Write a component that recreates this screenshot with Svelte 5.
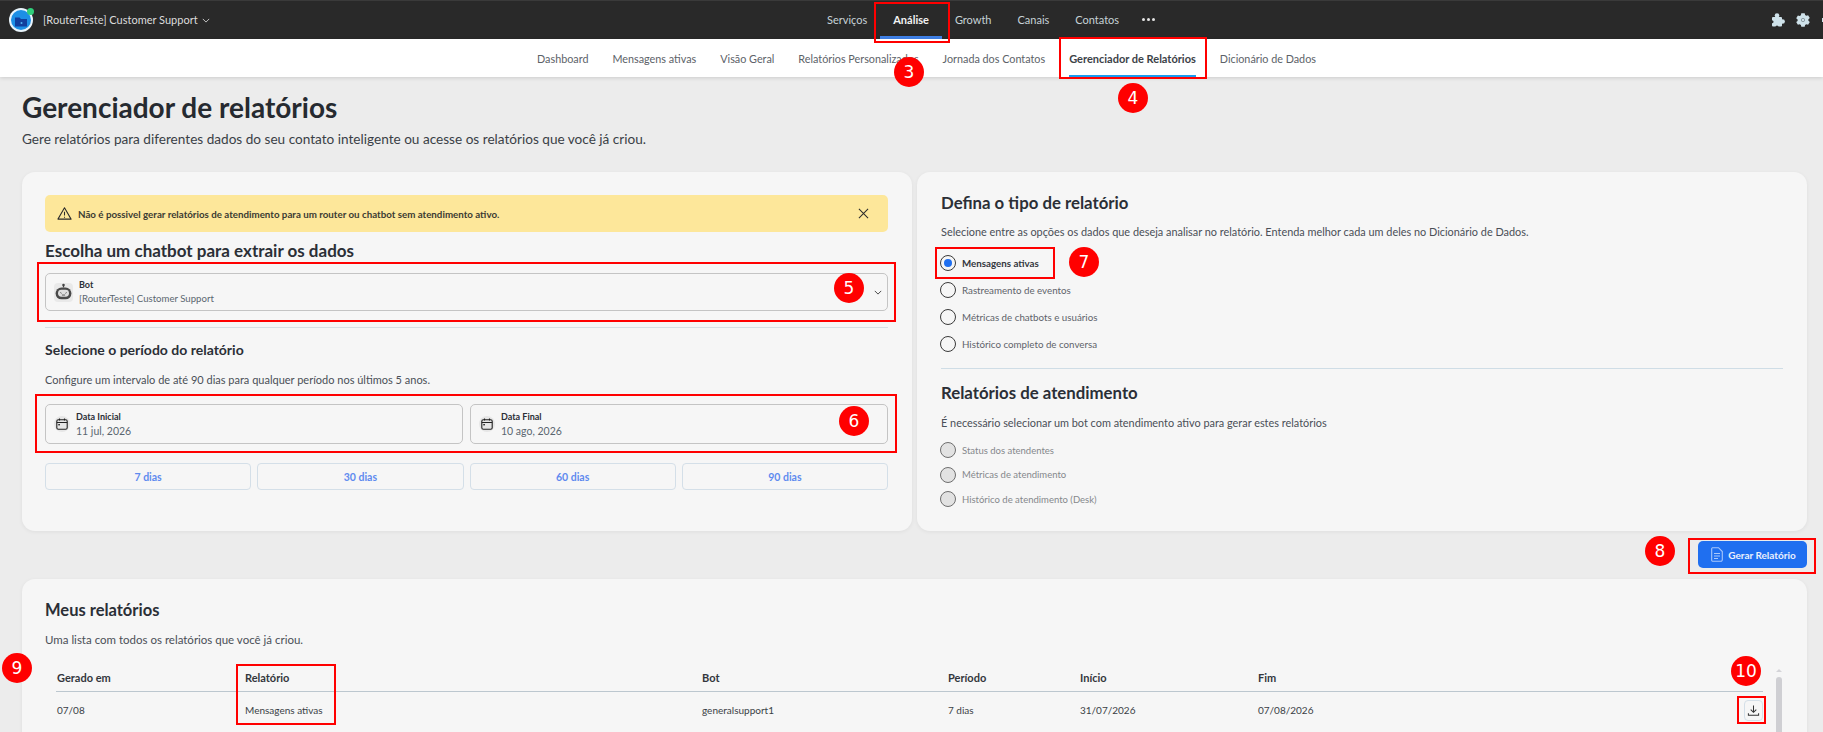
<script>
  const mainNav = ['Serviços', 'Análise', 'Growth', 'Canais', 'Contatos'];
  const subNav = ['Dashboard', 'Mensagens ativas', 'Visão Geral', 'Relatórios Personalizados', 'Jornada dos Contatos', 'Gerenciador de Relatórios', 'Dicionário de Dados'];
  const dates = [{ label: 'Data Inicial', value: '11 jul, 2026' }, { label: 'Data Final', value: '10 ago, 2026' }];
  const ranges = ['7 dias', '30 dias', '60 dias', '90 dias'];
  const types = ['Mensagens ativas', 'Rastreamento de eventos', 'Métricas de chatbots e usuários', 'Histórico completo de conversa'];
  const desk = ['Status dos atendentes', 'Métricas de atendimento', 'Histórico de atendimento (Desk)'];
  const marks = [3, 4, 5, 6, 7, 8, 9, 10];
  const boxes = ['a', 'b', 'c', 'd', 'e', 'f', 'g', 'h'];
</script>

<div class="page">
  <header class="top">
    <div class="brand">
      <span class="logo">
        <svg viewBox="0 0 24 24" width="24" height="24">
          <circle cx="12" cy="12" r="12" fill="#e9f4fb" />
          <circle cx="12" cy="12" r="10" fill="#1d8fe6" />
          <path d="M6 9.500h4.500l1.500 1.500h6v7.500H6z" fill="#123f9e" />
          <circle cx="12.500" cy="15" r="1" fill="#4fb2f2" />
        </svg>
        <i class="online"></i>
      </span>
      <span class="bot-name">[RouterTeste] Customer Support</span>
      <svg class="caret" viewBox="0 0 10 6" width="8" height="5"><path d="M1 1l4 4 4-4" fill="none" stroke="#d8d8d8" stroke-width="1.100" /></svg>
    </div>
    <nav class="main-nav">
      {#each mainNav as item, i}
        <span class="tab" class:on={i === 1}>{item}</span>
      {/each}
      <span class="more"><i></i><i></i><i></i></span>
    </nav>
    <div class="tools">
      <svg viewBox="0 0 14 14" width="14" height="14">
        <rect x="1" y="4" width="10" height="9.500" rx="1" fill="#cfe2ea" />
        <circle cx="6" cy="2.600" r="2.300" fill="#cfe2ea" />
        <circle cx="11.600" cy="8.500" r="2.300" fill="#cfe2ea" />
        <circle cx="1" cy="8.700" r="1.500" fill="#292929" />
        <circle cx="6" cy="14" r="1.500" fill="#292929" />
      </svg>
      <svg viewBox="0 0 14 14" width="14" height="14">
        <path d="M5.300.3h3.400l.4 1.800 1.200.7 1.800-.6 1.700 2.900-1.400 1.200v1.400l1.400 1.200-1.700 2.900-1.800-.6-1.200.7-.4 1.800H5.300l-.4-1.800-1.200-.7-1.800.6L.2 9.100l1.400-1.200V6.500L.2 5.300l1.700-2.900 1.800.6 1.200-.7z" fill="#cfe2ea" />
        <circle cx="7" cy="7" r="1.700" fill="none" stroke="#7b8a90" stroke-width=".8" />
      </svg>
      <i class="sliver"></i>
    </div>
  </header>

  <nav class="sub-nav">
    {#each subNav as item, i}
      <span class="sub" class:on={i === 5}>{item}</span>
    {/each}
  </nav>

  <main>
    <h1>Gerenciador de relatórios</h1>
    <p class="lead">Gere relatórios para diferentes dados do seu contato inteligente ou acesse os relatórios que você já criou.</p>

    <div class="cards">
      <section class="card left">
        <div class="alert">
          <svg viewBox="0 0 16 16" width="15" height="15"><path d="M8 1.800L1 14h14z" fill="none" stroke="#2a2a2a" stroke-width="1.100" stroke-linejoin="round" /><path d="M8 6v4.200M8 11.500v1" stroke="#2a2a2a" stroke-width="1.100" /></svg>
          <span class="alert-text">Não é possivel gerar relatórios de atendimento para um router ou chatbot sem atendimento ativo.</span>
          <svg class="close" viewBox="0 0 12 12" width="11" height="11"><path d="M1 1l10 10M11 1L1 11" stroke="#2a2a2a" stroke-width="1.100" /></svg>
        </div>
        <h2 class="h-bot">Escolha um chatbot para extrair os dados</h2>
        <div class="select">
          <span class="ico-bot">
            <svg viewBox="0 0 18 18" width="19" height="19">
              <path d="M9 1.200v3" stroke="#444" stroke-width="1.200" /><circle cx="9" cy="1.800" r="1.200" fill="#444" />
              <rect x="1.500" y="4.200" width="15" height="11.300" rx="5.500" fill="#4a4a4a" />
              <rect x="3.800" y="6.500" width="10.400" height="6.500" rx="3.200" fill="#dedede" />
              <path d="M6 9l1.200.8M12 9l-1.200.8M7.500 11.400h3" stroke="#444" stroke-width=".8" fill="none" />
            </svg>
          </span>
          <span class="field f-bot">
            <b>Bot</b>
            <span>[RouterTeste] Customer Support</span>
          </span>
          <svg class="chev" viewBox="0 0 10 6" width="8" height="5"><path d="M1 1l4 4 4-4" fill="none" stroke="#444" stroke-width="1.200" /></svg>
        </div>
        <hr />
        <h3>Selecione o período do relatório</h3>
        <p class="note">Configure um intervalo de até 90 dias para qualquer período nos últimos 5 anos.</p>
        <div class="dates">
          {#each dates as d}
            <div class="date">
              <span class="ico-cal">
                <svg viewBox="0 0 12 12" width="12" height="12"><rect x=".8" y="1.800" width="10.400" height="9.400" rx="1.500" fill="none" stroke="#222" stroke-width="1.100" /><path d="M.8 4.500h10.400M3.500.5v2M8.500.5v2" stroke="#222" stroke-width="1.100" /><rect x="2.300" y="6" width="1.600" height="1.400" fill="#222" /></svg>
              </span>
              <span class="field">
                <b>{d.label}</b>
                <span>{d.value}</span>
              </span>
            </div>
          {/each}
        </div>
        <div class="ranges">
          {#each ranges as r}
            <span class="range">{r}</span>
          {/each}
        </div>
      </section>

      <section class="card right">
        <h2 class="h-type">Defina o tipo de relatório</h2>
        <p class="note n-type">Selecione entre as opções os dados que deseja analisar no relatório. Entenda melhor cada um deles no Dicionário de Dados.</p>
        <div class="radios">
          {#each types as t, i}
            <div class="radio" class:checked={i === 0}><i></i><span>{t}</span></div>
          {/each}
        </div>
        <hr class="hr-type" />
        <h2 class="h-type">Relatórios de atendimento</h2>
        <p class="note n-type">É necessário selecionar um bot com atendimento ativo para gerar estes relatórios</p>
        <div class="radios off">
          {#each desk as t}
            <div class="radio disabled"><i></i><span>{t}</span></div>
          {/each}
        </div>
      </section>
    </div>

    <div class="actions">
      <button class="generate">
        <svg viewBox="0 0 12 15" width="12" height="15"><path d="M1.500.7h6l3.800 3.800v8.300a1.500 1.500 0 0 1-1.500 1.500H1.500A1 1 0 0 1 .7 13.300V1.500A1 1 0 0 1 1.500.7z" fill="none" stroke="#a9c8fb" stroke-width="1.100" /><path d="M3 6.500h6M3 9h6M3 11.500h4" stroke="#a9c8fb" stroke-width="1" /></svg>
        Gerar Relatório
      </button>
    </div>

    <section class="card list">
      <h2 class="h-list">Meus relatórios</h2>
      <p class="note n-list">Uma lista com todos os relatórios que você já criou.</p>
      <div class="table-wrap">
        <div class="table">
          <div class="row head">
            <span>Gerado em</span><span>Relatório</span><span>Bot</span><span>Período</span><span>Início</span><span>Fim</span><span></span>
          </div>
          <div class="row">
            <span>07/08</span><span>Mensagens ativas</span><span>generalsupport1</span><span>7 dias</span><span>31/07/2026</span><span>07/08/2026</span>
            <span class="dl-cell">
              <span class="dl">
                <svg viewBox="0 0 14 14" width="13" height="13"><path d="M7 1.500v7M4 6l3 3 3-3" fill="none" stroke="#333" stroke-width="1.100" /><path d="M1.500 10v2.200h11V10" fill="none" stroke="#333" stroke-width="1.100" /></svg>
              </span>
            </span>
          </div>
        </div>
        <div class="scroll"><i class="arrow"></i><i class="thumb"></i></div>
      </div>
    </section>
  </main>

  {#each boxes as b}
    <div class="box box-{b}"></div>
  {/each}
  {#each marks as m}
    <div class="mark mark-{m}">{m}</div>
  {/each}
</div>

<style>
  :global(body) { margin: 0; background: #ececec; }
  .page { position: relative; width: 1823px; height: 732px; overflow: hidden; font-family: "Lato", "Open Sans", sans-serif; color: #2b2f36; background: #ececec; }
  .top { height: 39px; box-sizing: border-box; border-top: 1px solid #3a3a3a; background: #292929; display: grid; grid-template-columns: 814px auto 1fr; align-items: center; }
  .brand { display: flex; align-items: center; padding-left: 9px; }
  .logo { position: relative; width: 24px; height: 24px; display: block; margin-right: 10px; }
  .logo svg { display: block; }
  .online { position: absolute; left: 18px; top: -0.500px; width: 7px; height: 7px; border-radius: 50%; background: #2fcf7a; }
  .bot-name { font-size: 11px; line-height: 14px; padding-bottom: 1px; color: #dcdcdc; white-space: nowrap; }
  .caret { margin-left: 4px; }
  .main-nav { display: flex; align-items: stretch; height: 38px; }
  .tab { display: flex; align-items: center; padding: 0 13px 2px; font-size: 11px; color: #c6d2d6; position: relative; white-space: nowrap; }
  .tab.on { color: #f2f2f2; font-weight: 700; }
  .tab.on::after { content: ""; position: absolute; left: 0; right: 0; bottom: 0; height: 3px; background: #3f80e6; }
  .more { display: flex; align-items: center; gap: 2px; margin-left: 10px; padding-bottom: 2px; }
  .more i { width: 3px; height: 3px; border-radius: 50%; background: #e4e4e4; }
  .tools { display: flex; justify-content: flex-end; align-items: center; gap: 11px; padding-right: 13px; position: relative; }
  .sliver { position: absolute; right: 0; width: 1px; height: 4px; background: #cfe2ea; }
  .sub-nav { height: 38px; background: #fff; box-shadow: 0 1px 4px rgba(0,0,0,.14); display: flex; justify-content: center; gap: 24px; padding-left: 30px; position: relative; box-sizing: border-box; }
  .sub { font-size: 10.800px; padding-top: 1px; color: #5c6268; display: flex; align-items: center; position: relative; white-space: nowrap; }
  .sub.on { font-size: 11px; font-weight: 700; color: #3c4248; }
  .sub.on::after { content: ""; position: absolute; left: 0; right: 0; bottom: 0; height: 2px; background: #1a9bf0; }
  main { padding: 0 16px 0 22px; }
  h1 { margin: 0; padding-top: 12px; font-size: 28px; line-height: 36px; font-weight: 700; color: #262a30; }
  .lead { margin: 0; padding-top: 5px; font-size: 13.600px; line-height: 18px; color: #3a3f46; }
  .cards { display: grid; grid-template-columns: 890px 890px; gap: 5px; margin-top: 24px; }
  .card { background: #f6f6f6; border-radius: 13px; box-shadow: 0 1px 4px rgba(0,0,0,.06); box-sizing: border-box; }
  .left { height: 359px; padding: 23px 24px 0 23px; }
  .alert { height: 37px; background: #fde79a; border-radius: 5px; display: flex; align-items: center; padding: 0 19px 0 12px; font-size: 9.750px; font-weight: 700; color: #3b3b32; }
  .alert-text { margin-left: 6px; flex: 1; }
  h2, h3 { margin: 0; font-weight: 700; color: #2b2f36; }
  .h-bot { font-size: 17px; line-height: 22px; margin-top: 8px; }
  .select { margin-top: 11px; height: 38px; box-sizing: border-box; border: 1px solid #c4c4c4; border-radius: 5px; display: flex; align-items: center; padding: 0 5px 0 8px; }
  .ico-bot { width: 19px; height: 19px; background: #e9e9e9; border-radius: 4px; display: flex; margin-right: 6px; }
  .field { flex: 1; display: flex; flex-direction: column; gap: 3.500px; font-size: 10.500px; line-height: 12px; color: #5b6670; }
  .field b { font-size: 9px; line-height: 11px; color: #2b2f36; }
  .f-bot { font-size: 9.600px; gap: 3px; }
  hr { margin: 16px 0 0; border: 0; border-top: 1px solid #d6dee4; }
  h3 { font-size: 14px; line-height: 18px; margin-top: 13px; }
  .note { margin: 0; font-size: 11px; line-height: 14px; color: #4a4f57; }
  .left .note { margin-top: 14px; }
  .dates { display: grid; grid-template-columns: 1fr 1fr; gap: 7px; margin-top: 17px; }
  .date { height: 40px; box-sizing: border-box; border: 1px solid #c4c4c4; border-radius: 5px; display: flex; align-items: center; padding: 0 8px; }
  .ico-cal { width: 16px; height: 16px; border-radius: 50%; background: #e6e6e6; display: flex; align-items: center; justify-content: center; margin-right: 6px; }
  .ranges { display: grid; grid-template-columns: repeat(4, 1fr); gap: 6px; margin-top: 19px; }
  .range { height: 27px; box-sizing: border-box; border: 1px solid #d4dfe8; border-radius: 4px; display: flex; align-items: center; justify-content: center; font-size: 10.500px; font-weight: 700; color: #5f8bef; }
  .right { height: 359px; padding: 20px 24px 0 24px; }
  .h-type { font-size: 16.800px; line-height: 22px; }
  .n-type { margin-top: 11px; font-size: 10.900px; }
  .radios { display: flex; flex-direction: column; gap: 11px; margin-top: 16px; margin-left: -1px; }
  .radio { display: flex; align-items: center; gap: 6px; height: 16px; font-size: 9.750px; color: #5e636a; }
  .radio i { width: 16px; height: 16px; box-sizing: border-box; border: 1px solid #3a3a3a; border-radius: 50%; display: block; position: relative; }
  .checked span { font-weight: 700; color: #33373d; }
  .checked i::after { content: ""; position: absolute; left: 3px; top: 3px; width: 8px; height: 8px; background: #1f6ff0; border-radius: 50%; }
  .hr-type { margin-top: 16px; border-top-color: #cfdde6; }
  .hr-type + .h-type { margin-top: 13px; }
  .hr-type ~ .n-type { margin-top: 12px; }
  .off { gap: 8.500px; margin-top: 12px; }
  .disabled { color: #85888c; font-size: 9.500px; }
  .disabled i { background: #e2e2e2; border-color: #6e6e6e; }
  .actions { display: flex; justify-content: flex-end; margin-top: 10px; }
  .generate { width: 109px; height: 27px; border: 0; border-radius: 5px; background: #1f6ff0; color: #e9f0fd; font: 700 10px "Lato", sans-serif; display: flex; align-items: center; justify-content: center; gap: 5px; padding: 0 0 0 2px; }
  .list { margin-top: 11px; height: 260px; padding: 21px 24px 0 23px; }
  .h-list { font-size: 16.500px; line-height: 20px; }
  .n-list { margin-top: 13px; font-size: 11.500px; }
  .table-wrap { display: flex; margin-top: 15px; }
  .table { width: 1707px; margin-left: 11px; }
  .row { display: grid; grid-template-columns: 188px 457px 246px 132px 178px 486px 20px; align-items: center; font-size: 10px; color: #3a3f46; height: 36px; padding-left: 1px; }
  .head { height: 30px; padding-top: 1px; border-bottom: 1px solid #bcc7cf; font-size: 11px; font-weight: 700; color: #33373d; box-sizing: border-box; }
  .dl-cell { display: flex; justify-content: flex-end; }
  .dl { width: 20px; height: 21px; box-sizing: border-box; border: 1px solid #d4dfe8; border-radius: 4px; display: flex; align-items: center; justify-content: center; margin-right: 1px; }
  .scroll { margin-left: 13px; width: 6px; position: relative; }
  .arrow { position: absolute; top: 7px; left: 0; border: 3px solid transparent; border-top: 0; border-bottom: 3px solid #d4d4d8; }
  .thumb { position: absolute; top: 15px; left: 0; width: 6px; height: 60px; background: #cfcfd3; border-radius: 3px; }

  .box { position: absolute; box-sizing: border-box; border: 2px solid #f00; pointer-events: none; }
  .box-a { left: 874px; top: 2px; width: 76px; height: 41px; }
  .box-b { left: 1059px; top: 37px; width: 148px; height: 42px; }
  .box-c { left: 37px; top: 262px; width: 859px; height: 60px; }
  .box-d { left: 35px; top: 394px; width: 862px; height: 59px; }
  .box-e { left: 935px; top: 247px; width: 120px; height: 32px; }
  .box-f { left: 1688px; top: 538px; width: 128px; height: 36px; }
  .box-g { left: 236px; top: 664px; width: 100px; height: 61px; }
  .box-h { left: 1737px; top: 696px; width: 29px; height: 28px; }
  .mark { position: absolute; width: 30px; height: 30px; border-radius: 50%; background: #f00; color: #fff; display: flex; align-items: center; justify-content: center; font: 17px "DejaVu Sans", sans-serif; }
  .mark-3 { left: 894px; top: 57px; }
  .mark-4 { left: 1118px; top: 83px; }
  .mark-5 { left: 834px; top: 273px; }
  .mark-6 { left: 839px; top: 406px; }
  .mark-7 { left: 1069px; top: 247px; }
  .mark-8 { left: 1645px; top: 536px; }
  .mark-9 { left: 2px; top: 653px; }
  .mark-10 { left: 1731px; top: 656px; }
</style>
